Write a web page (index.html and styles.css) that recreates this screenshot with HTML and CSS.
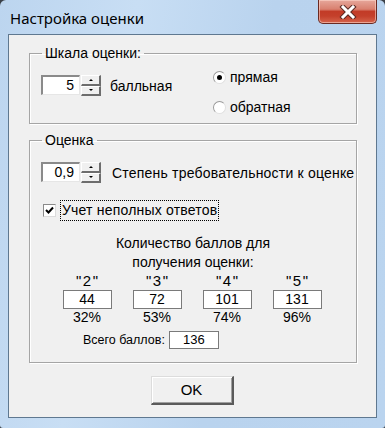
FILE: index.html
```html
<!DOCTYPE html>
<html lang="ru">
<head>
<meta charset="utf-8">
<title>Настройка оценки</title>
<link rel="stylesheet" href="styles.css">
</head>
<body>
<div class="window">
  <div class="titlebar">
    <span class="title">Настройка оценки</span>
    <div class="close">
      <svg width="20" height="14" viewBox="0 0 20 14">
        <path d="M5 2 L15 12 M15 2 L5 12" stroke="#5a2a24" stroke-width="5" stroke-linecap="square" fill="none"/>
        <path d="M5 2 L15 12 M15 2 L5 12" stroke="#ffffff" stroke-width="3" stroke-linecap="square" fill="none"/>
      </svg>
    </div>
  </div>
  <div class="client">
    <fieldset class="group g1">
      <legend>Шкала оценки:</legend>
      <div class="scale-row">
        <div class="spinrow">
          <div class="spinner">
            <div class="tb">5</div>
            <div class="spinbtns"><div class="sb up"><i></i></div><div class="sb down"><i></i></div></div>
          </div>
          <span class="lbl-ball">балльная</span>
        </div>
        <div class="radios">
          <div class="radio"><span class="rb on"></span><span>прямая</span></div>
          <div class="radio"><span class="rb"></span><span>обратная</span></div>
        </div>
      </div>
    </fieldset>
    <fieldset class="group g2">
      <legend>Оценка</legend>
      <div class="spinrow">
        <div class="spinner">
          <div class="tb">0,9</div>
          <div class="spinbtns"><div class="sb up"><i></i></div><div class="sb down"><i></i></div></div>
        </div>
        <span class="lbl-deg">Степень требовательности к оценке</span>
      </div>
      <div class="checkrow">
        <span class="cb">
          <svg width="11" height="11" viewBox="0 0 11 11"><path d="M2 5 L4.5 7.5 L9 2.5" stroke="#000" stroke-width="2" fill="none"/></svg>
        </span>
        <span class="cb-label">Учет неполных ответов</span>
      </div>
      <div class="heading">Количество баллов для<br>получения оценки:</div>
      <div class="grades">
        <div class="grade"><span class="q">"2"</span><span class="box">44</span><span class="pct">32%</span></div>
        <div class="grade"><span class="q">"3"</span><span class="box">72</span><span class="pct">53%</span></div>
        <div class="grade"><span class="q">"4"</span><span class="box">101</span><span class="pct">74%</span></div>
        <div class="grade"><span class="q">"5"</span><span class="box">131</span><span class="pct">96%</span></div>
      </div>
      <div class="total"><span>Всего баллов:</span><span class="box tbox">136</span></div>
    </fieldset>
    <div class="okrow"><div class="ok">OK</div></div>
  </div>
</div>
</body>
</html>
```
FILE: styles.css
```css
html, body {
  margin: 0;
  padding: 0;
}
body {
  width: 385px;
  height: 428px;
  overflow: hidden;
  background: #3a4048;
  font-family: "Liberation Sans", Arial, sans-serif;
  font-size: 14px;
  color: #000;
  white-space: nowrap;
}
.window {
  width: 385px;
  height: 428px;
  box-sizing: border-box;
  border-radius: 6px 6px 3px 3px;
  background: linear-gradient(100deg, #bcd5ef 0%, #c8def4 30%, #b9d3ee 60%, #bad4ef 100%);
  display: flex;
  flex-direction: column;
}
.titlebar {
  height: 34px;
  display: flex;
  align-items: flex-start;
  flex: none;
}
.title {
  font-family: "Noto Sans", "Open Sans", sans-serif;
  font-size: 15px;
  line-height: 20px;
  margin: 8px 0 0 10px;
  color: #000;
}
.close {
  margin-left: auto;
  margin-right: 8px;
  width: 59px;
  height: 24px;
  box-sizing: border-box;
  border: 1px solid #6a2a22;
  border-top: none;
  border-radius: 0 0 5px 5px;
  background: linear-gradient(180deg, #e6a79b 0%, #d9806f 40%, #c23b27 50%, #c4402b 70%, #d5644c 100%);
  box-shadow: inset 0 0 0 1px rgba(255, 220, 210, 0.55);
  display: flex;
  align-items: center;
  justify-content: center;
}
.close svg {
  display: block;
  margin-top: 1px;
}
.client {
  margin: 0 8px;
  height: 384px;
  box-sizing: border-box;
  border: 1px solid #5f7890;
  background: #f0f0f0;
  display: flex;
  flex-direction: column;
  flex: none;
}
.group {
  margin: 10px 19px 0 20px;
  padding: 6px 11px 6px 11px;
  border: 1px solid #a5a5a5;
  box-shadow: inset 1px 1px 0 #ffffff, 1px 1px 0 #ffffff;
  min-width: 0;
}
.group legend {
  padding: 0 3px;
  margin-left: 1px;
  line-height: 16px;
}
.g2 {
  margin-top: 8px;
  padding-top: 14px;
  padding-bottom: 13px;
}
.scale-row {
  display: grid;
  grid-template-columns: 172px auto;
  align-items: start;
}
.spinrow {
  display: flex;
  align-items: center;
}
.g1 .spinrow {
  margin-top: 8px;
}
.spinner {
  display: flex;
  align-items: flex-start;
}
.tb {
  width: 39px;
  height: 20px;
  box-sizing: border-box;
  background: #fff;
  border-style: solid;
  border-width: 2px 1px 1px 2px;
  border-color: #8a8a8a #e6e6e6 #e6e6e6 #8a8a8a;
  text-align: right;
  padding-right: 5px;
  line-height: 17px;
}
.spinbtns {
  margin-left: 1px;
  width: 20px;
  height: 21px;
  display: flex;
  flex-direction: column;
}
.sb {
  flex: 1;
  box-sizing: border-box;
  background: #f0f0f0;
  border-style: solid;
  border-width: 1px 2px 2px 1px;
  border-color: #ffffff #6d6d6d #6d6d6d #ffffff;
  display: flex;
  align-items: center;
  justify-content: center;
}
.sb i {
  display: block;
  width: 0;
  height: 0;
  border-left: 2px solid transparent;
  border-right: 2px solid transparent;
}
.sb.up i {
  border-bottom: 2px solid #000;
}
.sb.down i {
  border-top: 2px solid #000;
}
.lbl-ball {
  margin-left: 9px;
}
.lbl-deg {
  margin-left: 11px;
  letter-spacing: 0.2px;
}
.radios {
  display: flex;
  flex-direction: column;
  gap: 10px;
}
.radio {
  display: flex;
  align-items: center;
  height: 20px;
  gap: 4px;
}
.rb {
  width: 13px;
  height: 13px;
  box-sizing: border-box;
  border-radius: 50%;
  background: #fff;
  border: 1px solid;
  border-color: #9a9a9a #e0e0e0 #e0e0e0 #9a9a9a;
  display: flex;
  align-items: center;
  justify-content: center;
}
.rb.on::after {
  content: "";
  width: 5px;
  height: 5px;
  border-radius: 50%;
  background: #000;
}
.checkrow {
  margin-top: 17px;
  margin-left: 2px;
  display: flex;
  align-items: center;
}
.cb {
  width: 13px;
  height: 13px;
  box-sizing: border-box;
  background: #fff;
  border: 1px solid;
  border-color: #8a8a8a #dcdcdc #dcdcdc #8a8a8a;
  display: flex;
  align-items: center;
  justify-content: center;
}
.cb svg {
  display: block;
}
.cb-label {
  margin-left: 4px;
  border: 1px dotted #000;
  padding: 0 1px;
  line-height: 19px;
  letter-spacing: 0.2px;
}
.heading {
  margin-top: 13px;
  text-align: center;
  line-height: 19px;
}
.grades {
  margin-left: 11px;
  display: grid;
  grid-template-columns: repeat(4, 70px);
}
.grade {
  display: flex;
  flex-direction: column;
  align-items: center;
}
.q {
  line-height: 17px;
  letter-spacing: 1.5px;
  padding-left: 1.5px;
  font-size: 15px;
}
.box {
  display: block;
  box-sizing: border-box;
  width: 49px;
  height: 19px;
  margin-top: 1px;
  background: #fff;
  border: 1px solid #7a7a7a;
  text-align: center;
  line-height: 17px;
}
.pct {
  line-height: 17px;
}
.total {
  margin-top: 5px;
  margin-left: 42px;
  display: flex;
  align-items: center;
  font-size: 12.5px;
}
.tbox {
  width: 50px;
  height: 18px;
  margin: 0 0 0 4px;
  line-height: 16px;
  font-size: 13px;
}
.okrow {
  margin-top: 13px;
  display: flex;
  justify-content: center;
}
.ok {
  width: 83px;
  height: 29px;
  box-sizing: border-box;
  background: #f0f0f0;
  border-style: solid;
  border-width: 1px 2px 2px 1px;
  border-color: #dcdcdc #5a5a5a #5a5a5a #dcdcdc;
  box-shadow: inset 1px 1px 0 #ffffff, inset -1px -1px 0 #a0a0a0;
  text-align: center;
  line-height: 26px;
  font-size: 15px;
  margin-right: 1px;
}
```
